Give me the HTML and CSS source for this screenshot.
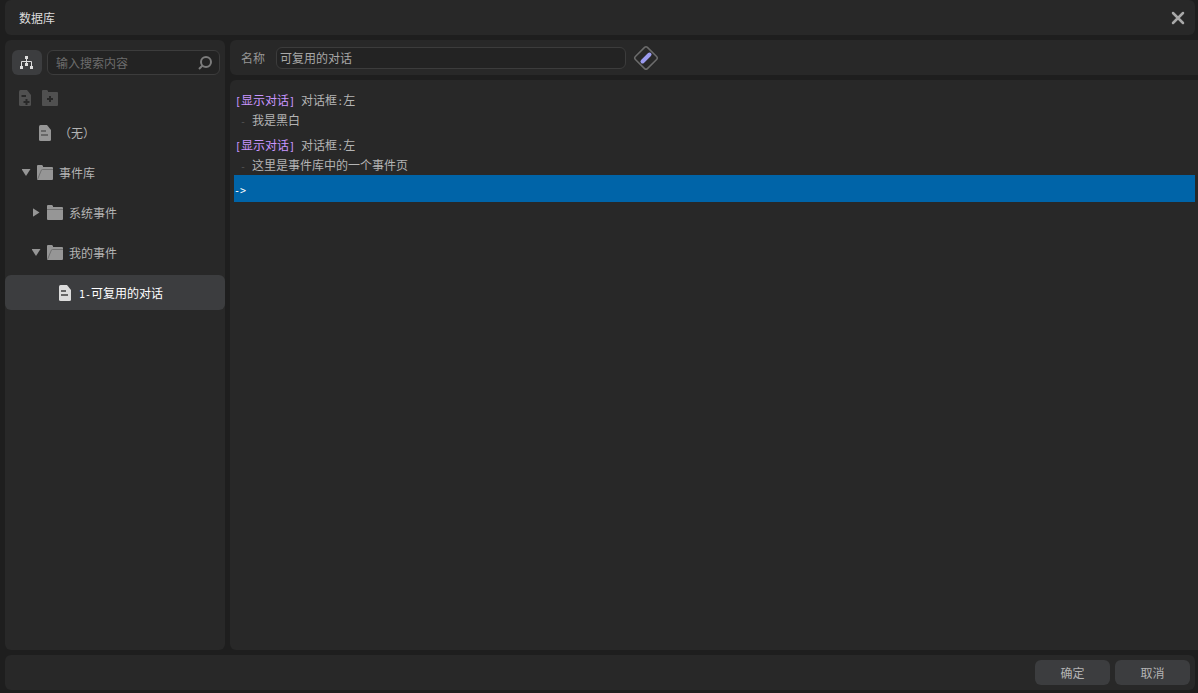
FILE: index.html
```html
<!DOCTYPE html>
<html lang="zh-CN">
<head>
<meta charset="utf-8">
<title>数据库</title>
<link rel="stylesheet" href="styles.css">
</head>
<body>
<svg class="defs" aria-hidden="true">
  <symbol id="file" viewBox="0 0 16 16"><path fill="currentColor" d="M3.500 0H10l4 5v9.500q0 1.500-1.500 1.500h-9Q2 16 2 14.500v-13Q2 0 3.500 0z"/><path class="ink" d="M4 5h5v2H4zM4 9h7v2H4z"/></symbol>
  <symbol id="open" viewBox="0 0 16 16"><path fill="currentColor" d="M0 1q0-1 1-1h4l1 1v1h9q1 0 1 1v11q0 1-1 1H1q-1 0-1-1z"/><path class="line" d="M.5 14.500L4 6q.3-1.500 1.300-1.500H16"/></symbol>
  <symbol id="closed" viewBox="0 0 16 16"><path fill="currentColor" d="M0 1q0-1 1-1h4l1 1v1h9q1 0 1 1v11q0 1-1 1H1q-1 0-1-1z"/><path class="line" d="M0 4.500h16"/></symbol>
</svg>
<main class="window">
  <header class="panel titlebar">
    <h1 class="title">数据库</h1>
    <button class="close" type="button" aria-label="关闭"><svg width="14" height="14" viewBox="0 0 14 14"><path d="M2 2l10 10M12 2L2 12"/></svg></button>
  </header>

  <aside class="panel sidebar">
    <div class="search-row">
      <button class="tree-mode" type="button" aria-label="树形视图"><svg width="14" height="14" viewBox="0 0 14 14"><path fill="currentColor" d="M5 0h3v3H7v2h4q1 0 1 1v4h1v3h-3v-3h1V6H7v1h1v3H5V7h1V6H2v4h1v3H0v-3h1V6q0-1 1-1h4V3H5z"/></svg></button>
      <label class="search">
        <input type="text" placeholder="输入搜索内容" aria-label="搜索">
        <svg width="14" height="14" viewBox="0 0 14 14"><circle cx="8" cy="6" r="5"/><path d="M4.500 9.500L1 13"/></svg>
      </label>
    </div>
    <div class="tools">
      <button type="button" aria-label="新建文件"><svg width="16" height="16" viewBox="0 0 16 16"><path fill="currentColor" d="M3.500 0H10l4 5v9.500q0 1.500-1.500 1.500h-9Q2 16 2 14.500v-13Q2 0 3.500 0z"/><path class="cut" d="M4.500 5H9v2H4.500zM8.500 9h2v2h2v2h-2v2h-2v-2h-2v-2h2z"/></svg></button>
      <button type="button" aria-label="新建文件夹"><svg width="16" height="16" viewBox="0 0 16 16"><path fill="currentColor" d="M0 1q0-1 1-1h4l1 1v1h9q1 0 1 1v12q0 1-1 1H1q-1 0-1-1z"/><path class="cut" d="M7 6h2v2h2v2H9v2H7v-2H5V8h2z"/></svg></button>
    </div>
    <nav class="tree">
      <button class="node" type="button"><span class="arrow"></span><svg class="icon"><use href="#file"/></svg><span>（无）</span></button>
      <button class="node" type="button"><span class="arrow down"></span><svg class="icon"><use href="#open"/></svg><span>事件库</span></button>
      <button class="node level-1" type="button"><span class="arrow right"></span><svg class="icon"><use href="#closed"/></svg><span>系统事件</span></button>
      <button class="node level-1" type="button"><span class="arrow down"></span><svg class="icon"><use href="#open"/></svg><span>我的事件</span></button>
      <button class="node level-2 selected" type="button"><span class="arrow"></span><svg class="icon"><use href="#file"/></svg><span><span class="half">1-</span>可复用的对话</span></button>
    </nav>
  </aside>

  <section class="panel namebar">
    <label for="name">名称</label>
    <input id="name" class="name" type="text" value="可复用的对话">
    <button class="edit" type="button" aria-label="编辑"><svg width="26" height="26" viewBox="0 0 26 26"><rect class="diamond" x="4.500" y="4.500" width="17" height="17" rx="2" transform="rotate(45 13 13)"/><path class="pen" d="M9.500 16.500l7-7"/></svg></button>
  </section>

  <section class="panel script">
    <div class="command">
      <p><span class="keyword"><span class="half">[</span>显示对话<span class="half">]</span></span><span class="half"> </span>对话框<span class="half">:</span>左</p>
      <p class="text"><span class="dash half">-</span>我是黑白</p>
    </div>
    <div class="command">
      <p><span class="keyword"><span class="half">[</span>显示对话<span class="half">]</span></span><span class="half"> </span>对话框<span class="half">:</span>左</p>
      <p class="text"><span class="dash half">-</span>这里是事件库中的一个事件页</p>
    </div>
    <div class="cursor"><span class="half">-&gt;</span></div>
  </section>

  <footer class="panel footer">
    <button class="action" type="button">确定</button>
    <button class="action" type="button">取消</button>
  </footer>
</main>
</body>
</html>
```

FILE: styles.css
```css
* { box-sizing: border-box; }

body {
  margin: 0;
  background: #1e1e1e;
  color: #b4b4b4;
  font: 12px/20px "Noto Sans CJK SC", sans-serif;
}

button, input { margin: 0; padding: 0; border: 0; background: none; color: inherit; font: inherit; }
p, h1 { margin: 0; }
svg { display: block; flex: none; }
.defs { position: absolute; width: 0; height: 0; }

.window {
  display: grid;
  grid-template-columns: 220px 1fr;
  grid-template-rows: auto auto 1fr auto;
  gap: 5px;
  min-height: 100vh;
  padding: 0 0 3px 5px;
}

.panel { background: #282828; border-radius: 6px; }

.titlebar {
  grid-column: 1 / -1;
  display: flex;
  align-items: center;
  justify-content: space-between;
  height: 35px;
  margin-right: 3px;
  padding: 0 10px 0 14px;
}
.title { color: #dcdcdc; font-size: 12px; font-weight: 400; }
.close path { fill: none; stroke: #a8a8a8; stroke-width: 2.5; stroke-linecap: round; }

.sidebar { grid-row: 2 / 4; grid-column: 1; }
.search-row { display: flex; gap: 5px; padding: 10px 5px 0 7px; }
.tree-mode {
  display: grid;
  place-items: center;
  width: 30px;
  height: 25px;
  border-radius: 6px;
  background: #3c3d3f;
  color: #dcdcdc;
}
.search {
  flex: 1;
  display: flex;
  align-items: center;
  height: 25px;
  padding: 0 7px 0 8px;
  border: 1px solid #3c3c3c;
  border-radius: 6px;
  background: #232323;
}
.search input { flex: 1; min-width: 0; outline: 0; }
.search input::placeholder { color: #6c6c6c; opacity: 1; }
.search svg { fill: none; stroke: #7c7c7c; stroke-width: 2; }

.tools { display: flex; gap: 9px; padding: 15px 12px 9px; color: #505050; }
.cut { fill: #282828; }

.tree { display: flex; flex-direction: column; gap: 5px; }
.node {
  display: flex;
  align-items: center;
  height: 35px;
  padding-left: 15px;
  border-radius: 6px;
  text-align: left;
}
.level-1 { padding-left: 25px; }
.level-2 { padding-left: 35px; }
.selected { background: #3c3d3f; color: #fff; }
.icon { width: 16px; height: 16px; margin: 0 6px 0 5px; color: #969696; }
.selected .icon { color: #dcdcdc; }
.ink { fill: #666; }
.selected .ink { fill: #8c8c8c; }
.line { fill: none; stroke: #707070; }
.arrow { display: grid; place-items: center; width: 12px; }
.arrow::before { content: ""; background: #969696; }
.down::before { width: 9px; height: 7px; clip-path: polygon(0 0, 100% 0, 50% 100%); }
.right::before { width: 7px; height: 9px; clip-path: polygon(0 0, 100% 50%, 0 100%); }

.namebar { display: flex; align-items: center; height: 35px; padding-left: 11px; color: #969696; border-radius: 6px 0 0 6px; }
.name {
  width: 350px;
  height: 22px;
  margin: 0 7px 0 11px;
  padding: 0 3px;
  border: 1px solid #3c3c3c;
  border-radius: 6px;
  background: #232323;
  color: #a8a8a8;
  outline: 0;
}
.diamond { fill: none; stroke: #6c6c6c; stroke-width: 1.5; }
.pen { stroke: #9b9bef; stroke-width: 4; stroke-linecap: round; }

.script { padding: 10px 3px 0 4px; border-radius: 6px 0 0 6px; }
.command { padding: 0 1px 5px; }
.keyword { color: #c896ff; }
.half { font-family: "DejaVu Sans Mono", monospace; font-size: 10px; line-height: 1; }
.text { padding-left: 5px; }
.dash { padding-right: 6px; color: #505050; }
.cursor {
  height: 27px;
  margin-top: -5px;
  background: #0064a8;
  color: #fff;
  line-height: 27px;
}

.footer {
  grid-column: 1 / -1;
  display: flex;
  justify-content: flex-end;
  gap: 5px;
  height: 35px;
  margin-right: 3px;
  padding: 5px;
}
.action { width: 75px; height: 25px; border-radius: 6px; background: #3c3d3f; }
```
